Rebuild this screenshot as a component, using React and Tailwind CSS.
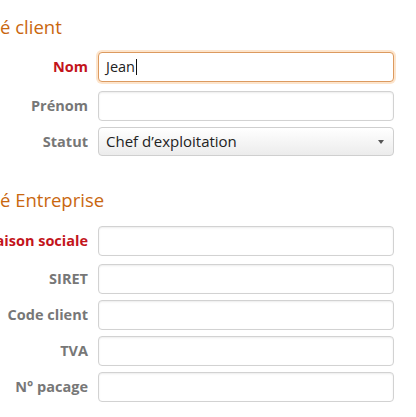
import React from "react";

const font = { fontFamily: '"Open Sans", "Noto Sans", sans-serif' };

function Label({ children, red }) {
  return (
    <div className="flex w-[88px] shrink-0 justify-end whitespace-nowrap">
      <span className={`text-[14.5px] font-bold ${red ? "text-[#c3141b]" : "text-[#777777]"}`}>{children}</span>
    </div>
  );
}

function Input({ value, focused }) {
  if (focused) {
    return (
      <div className="ml-[10px] flex h-[30px] w-[296px] items-center rounded-[4px] border border-[#dc9a5f] bg-white px-[7px] text-[14.5px] text-[#222] shadow-[0_0_0_2px_#fde5cd]">
        <span>{value}</span>
        <span className="ml-[1px] h-[16px] w-px bg-[#111]" />
      </div>
    );
  }
  return (
    <div className="ml-[10px] h-[30px] w-[296px] rounded-[4px] border border-[#d2d2d2] bg-white shadow-[inset_0_1px_2px_rgba(0,0,0,0.08)]" />
  );
}

function Row({ label, red, children, className = "" }) {
  return (
    <div className={`flex items-center ${className}`}>
      <Label red={red}>{label}</Label>
      {children}
    </div>
  );
}

function Heading({ hidden, shown, className = "" }) {
  return (
    <div className={`flex text-[18.5px] font-medium text-[#c9670f] ${className}`}>
      <span className="inline-flex w-0 justify-end whitespace-nowrap">{hidden}</span>
      <span className="whitespace-pre">{shown}</span>
    </div>
  );
}

export default function App() {
  return (
    <div className="h-[417px] w-[416px] overflow-hidden bg-white" style={font}>
      <Heading hidden="Identit" shown="é client" className="h-[26px] pt-[14px] leading-[26px] box-content" />
      <Row label="Nom" red className="mt-[12px]">
        <Input value="Jean" focused />
      </Row>
      <Row label="Prénom" className="mt-[9px]">
        <Input />
      </Row>
      <Row label="Statut" className="mt-[6px]">
        <div className="ml-[10px] flex h-[29px] w-[296px] items-center justify-between rounded-[4px] border border-[#cfcfcf] bg-gradient-to-b from-white to-[#ececec] pl-[7px] pr-[9px] text-[15px] text-[#222]">
          <span>Chef d’exploitation</span>
          <svg width="6" height="4" viewBox="0 0 6 4"><path d="M0 0h6L3 4z" fill="#555" /></svg>
        </div>
      </Row>
      <Heading hidden="Identit" shown="é Entreprise" className="mt-[31px] h-[26px] leading-[26px]" />
      <Row label="Raison sociale" red className="mt-[13px]">
        <Input />
      </Row>
      <Row label="SIRET" className="mt-[8px]">
        <Input />
      </Row>
      <Row label="Code client" className="mt-[6px]">
        <Input />
      </Row>
      <Row label="TVA" className="mt-[6px]">
        <Input />
      </Row>
      <Row label="N° pacage" className="mt-[6px]">
        <Input />
      </Row>
    </div>
  );
}
